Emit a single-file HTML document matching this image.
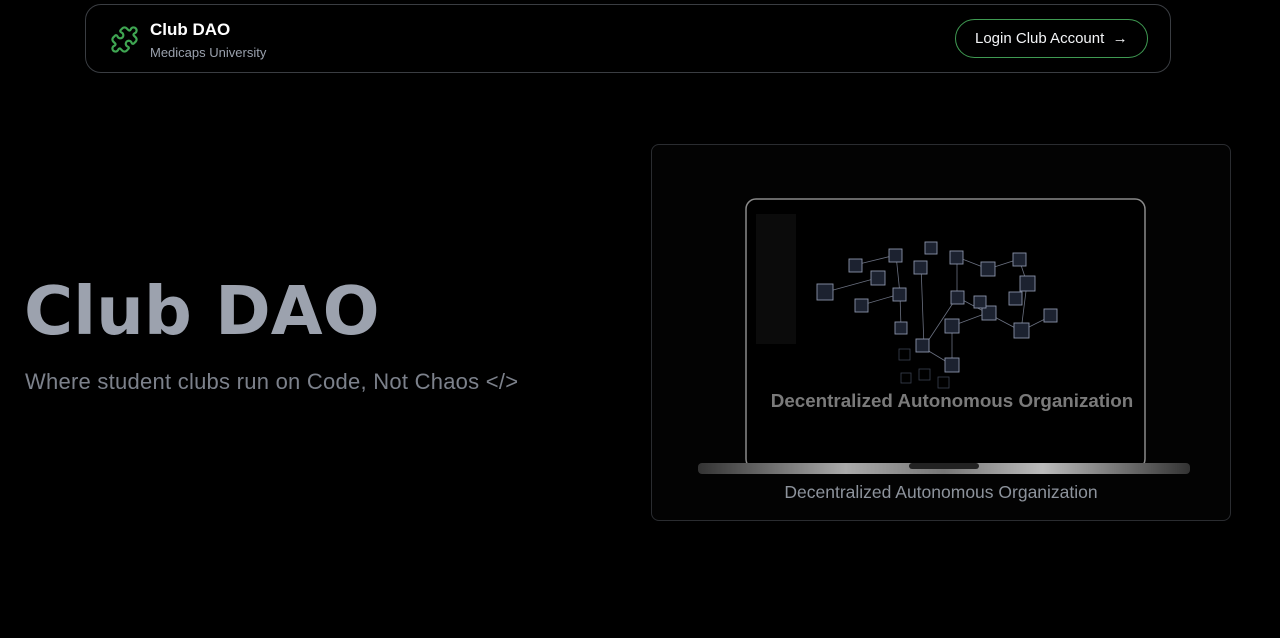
<!DOCTYPE html>
<html><head><meta charset="utf-8"><style>
*{margin:0;padding:0;box-sizing:border-box}
body{width:1280px;height:638px;background:#000;overflow:hidden;font-family:"Liberation Sans","DejaVu Sans",sans-serif;position:relative}
.nav{position:absolute;left:85px;top:4px;width:1086px;height:69px;border:1px solid #3a3d42;border-radius:16px}
.brand{position:absolute;left:64px;top:15px;color:#fff;font-size:17px;font-weight:bold}
.sub{position:absolute;left:64px;top:40px;color:#9aa1ad;font-size:13px}
.btn{position:absolute;left:869px;top:14px;width:193px;height:39px;border:1px solid #3f9a52;border-radius:20px;color:#f3f4f6;font-size:15px;line-height:37px;padding-left:19px}
h1{position:absolute;left:24px;top:278px;font-family:"DejaVu Sans",sans-serif;line-height:1;font-size:67px;color:#9ca2ae;font-weight:bold}
.tag{position:absolute;left:25px;top:369px;font-size:22px;letter-spacing:0.25px;color:#7c818b}
.card{position:absolute;left:651px;top:144px;width:580px;height:377px;border:1px solid #2a2c30;border-radius:8px;background:#030303}
.cap{position:absolute;left:0;width:100%;top:337px;text-align:center;color:#8d939c;font-size:17.5px}
</style></head><body>
<div class="nav">
<svg style="position:absolute;left:24px;top:20px" width="29" height="29" viewBox="0 0 24 24" fill="none" stroke="#3fa652" stroke-width="1.8" stroke-linejoin="round"><path d="M19.439 7.85c-.049.322.059.648.289.878l1.568 1.568c.47.47.706 1.087.706 1.704s-.235 1.233-.706 1.704l-1.611 1.611a.98.98 0 0 1-.837.276c-.47-.07-.802-.48-.968-.925a2.501 2.501 0 1 0-3.214 3.214c.446.166.855.497.925.968a.979.979 0 0 1-.276.837l-1.61 1.61a2.404 2.404 0 0 1-1.705.707 2.402 2.402 0 0 1-1.704-.706l-1.568-1.568a1.026 1.026 0 0 0-.877-.29c-.493.074-.84.504-1.02.968a2.5 2.5 0 1 1-3.237-3.237c.464-.18.894-.527.967-1.020a1.026 1.026 0 0 0-.289-.877l-1.568-1.568A2.402 2.402 0 0 1 1.998 12c0-.617.236-1.234.706-1.704L4.23 8.77c.24-.24.581-.353.917-.303.515.077.877.528 1.073 1.01a2.5 2.5 0 1 0 3.259-3.259c-.482-.196-.933-.558-1.01-1.073-.05-.336.062-.676.303-.917l1.525-1.525A2.402 2.402 0 0 1 12 1.998c.617 0 1.234.236 1.704.706l1.568 1.568c.23.23.556.338.877.29.493-.074.84-.504 1.02-.968a2.5 2.5 0 1 1 3.237 3.237c-.464.18-.894.527-.967 1.020Z"/></svg>
<div class="brand">Club DAO</div>
<div class="sub">Medicaps University</div>
<div class="btn">Login Club Account &nbsp;→</div>
</div>
<h1>Club DAO</h1>
<div class="tag">Where student clubs run on Code, Not Chaos &lt;/&gt;</div>
<div class="card">
<svg style="position:absolute;left:0;top:0" width="580" height="377" viewBox="651 144 580 377">
<defs><linearGradient id="b" x1="0" x2="1"><stop offset="0" stop-color="#333"/><stop offset=".3" stop-color="#aaa"/><stop offset=".5" stop-color="#777"/><stop offset=".7" stop-color="#bbb"/><stop offset="1" stop-color="#333"/></linearGradient></defs>
<rect x="745" y="198" width="399" height="270" rx="10" fill="#000" stroke="#8a8a8a" stroke-width="1.5"/>
<rect x="755" y="213" width="40" height="130" fill="#0b0b0b"/>
<g stroke="#6a7080" stroke-width="0.8" fill="none">
<path d="M825 291L876 277M854 264L895 254M895 254L899 293M861 304L899 293M899 293L900 327M920 264L923 346M956 256L956 296M956 256L987 268M987 268L1018 258M1018 258L1026 282M1026 282L1020 330M951 325L986 312M986 312L1020 330M1020 330L1050 315M923 346L956 296M956 296L986 312M951 325L951 364M921 346L951 364"/>
</g>
<g fill="#1c2230" stroke="#8a93a8" stroke-width="0.9">
<rect x="848" y="258" width="13" height="13"/><rect x="870" y="270" width="14" height="14"/><rect x="816" y="283" width="16" height="16"/><rect x="888" y="248" width="13" height="13"/><rect x="913" y="260" width="13" height="13"/><rect x="924" y="241" width="12" height="12"/><rect x="949" y="250" width="13" height="13"/><rect x="980" y="261" width="14" height="14"/><rect x="1012" y="252" width="13" height="13"/><rect x="1019" y="275" width="15" height="15"/><rect x="1008" y="291" width="13" height="13"/><rect x="981" y="305" width="14" height="14"/><rect x="950" y="290" width="13" height="13"/><rect x="892" y="287" width="13" height="13"/><rect x="854" y="298" width="13" height="13"/><rect x="894" y="321" width="12" height="12"/><rect x="915" y="338" width="13" height="13"/><rect x="944" y="318" width="14" height="14"/><rect x="944" y="357" width="14" height="14"/><rect x="1013" y="322" width="15" height="15"/><rect x="1043" y="308" width="13" height="13"/><rect x="973" y="295" width="12" height="12"/>
</g>
<g fill="none" stroke="#3a4050" stroke-width="0.8"><rect x="898" y="348" width="11" height="11"/><rect x="918" y="368" width="11" height="11"/><rect x="937" y="376" width="11" height="11"/><rect x="900" y="372" width="10" height="10"/></g>
<text x="951" y="406" text-anchor="middle" font-family="Liberation Sans,sans-serif" font-weight="bold" font-size="18.8" fill="#7a7a7a">Decentralized Autonomous Organization</text>
<rect x="697" y="462" width="492" height="11" rx="4" fill="url(#b)"/>
<rect x="908" y="462" width="70" height="6" rx="3" fill="#222"/>
</svg>
<div class="cap">Decentralized Autonomous Organization</div>
</div>
</body></html>
